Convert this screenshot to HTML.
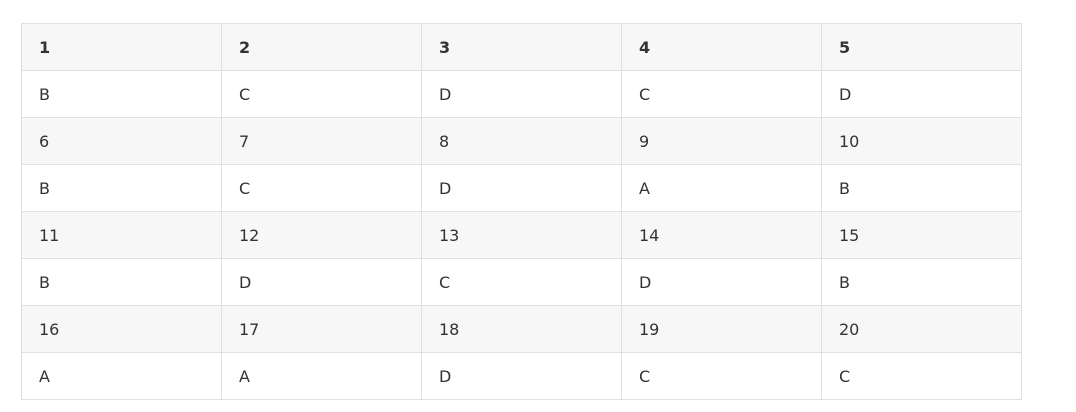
<!DOCTYPE html>
<html><head><style>
body{margin:0;background:#fff;width:1076px;height:412px;overflow:hidden}
table{position:absolute;left:21px;top:23px;border-collapse:collapse;font-family:"DejaVu Sans","Liberation Sans",sans-serif;font-size:16px;color:#333}
td{width:200px;height:47px;border:1px solid #e0e0e0;padding:0 0 0 17px;box-sizing:border-box;vertical-align:middle}
tr:nth-child(odd){background:#f7f7f7}
tr:first-child td{font-weight:bold}
</style></head><body>
<table>
<tr><td>1</td><td>2</td><td>3</td><td>4</td><td>5</td></tr>
<tr><td>B</td><td>C</td><td>D</td><td>C</td><td>D</td></tr>
<tr><td>6</td><td>7</td><td>8</td><td>9</td><td>10</td></tr>
<tr><td>B</td><td>C</td><td>D</td><td>A</td><td>B</td></tr>
<tr><td>11</td><td>12</td><td>13</td><td>14</td><td>15</td></tr>
<tr><td>B</td><td>D</td><td>C</td><td>D</td><td>B</td></tr>
<tr><td>16</td><td>17</td><td>18</td><td>19</td><td>20</td></tr>
<tr><td>A</td><td>A</td><td>D</td><td>C</td><td>C</td></tr>
</table>
</body></html>
